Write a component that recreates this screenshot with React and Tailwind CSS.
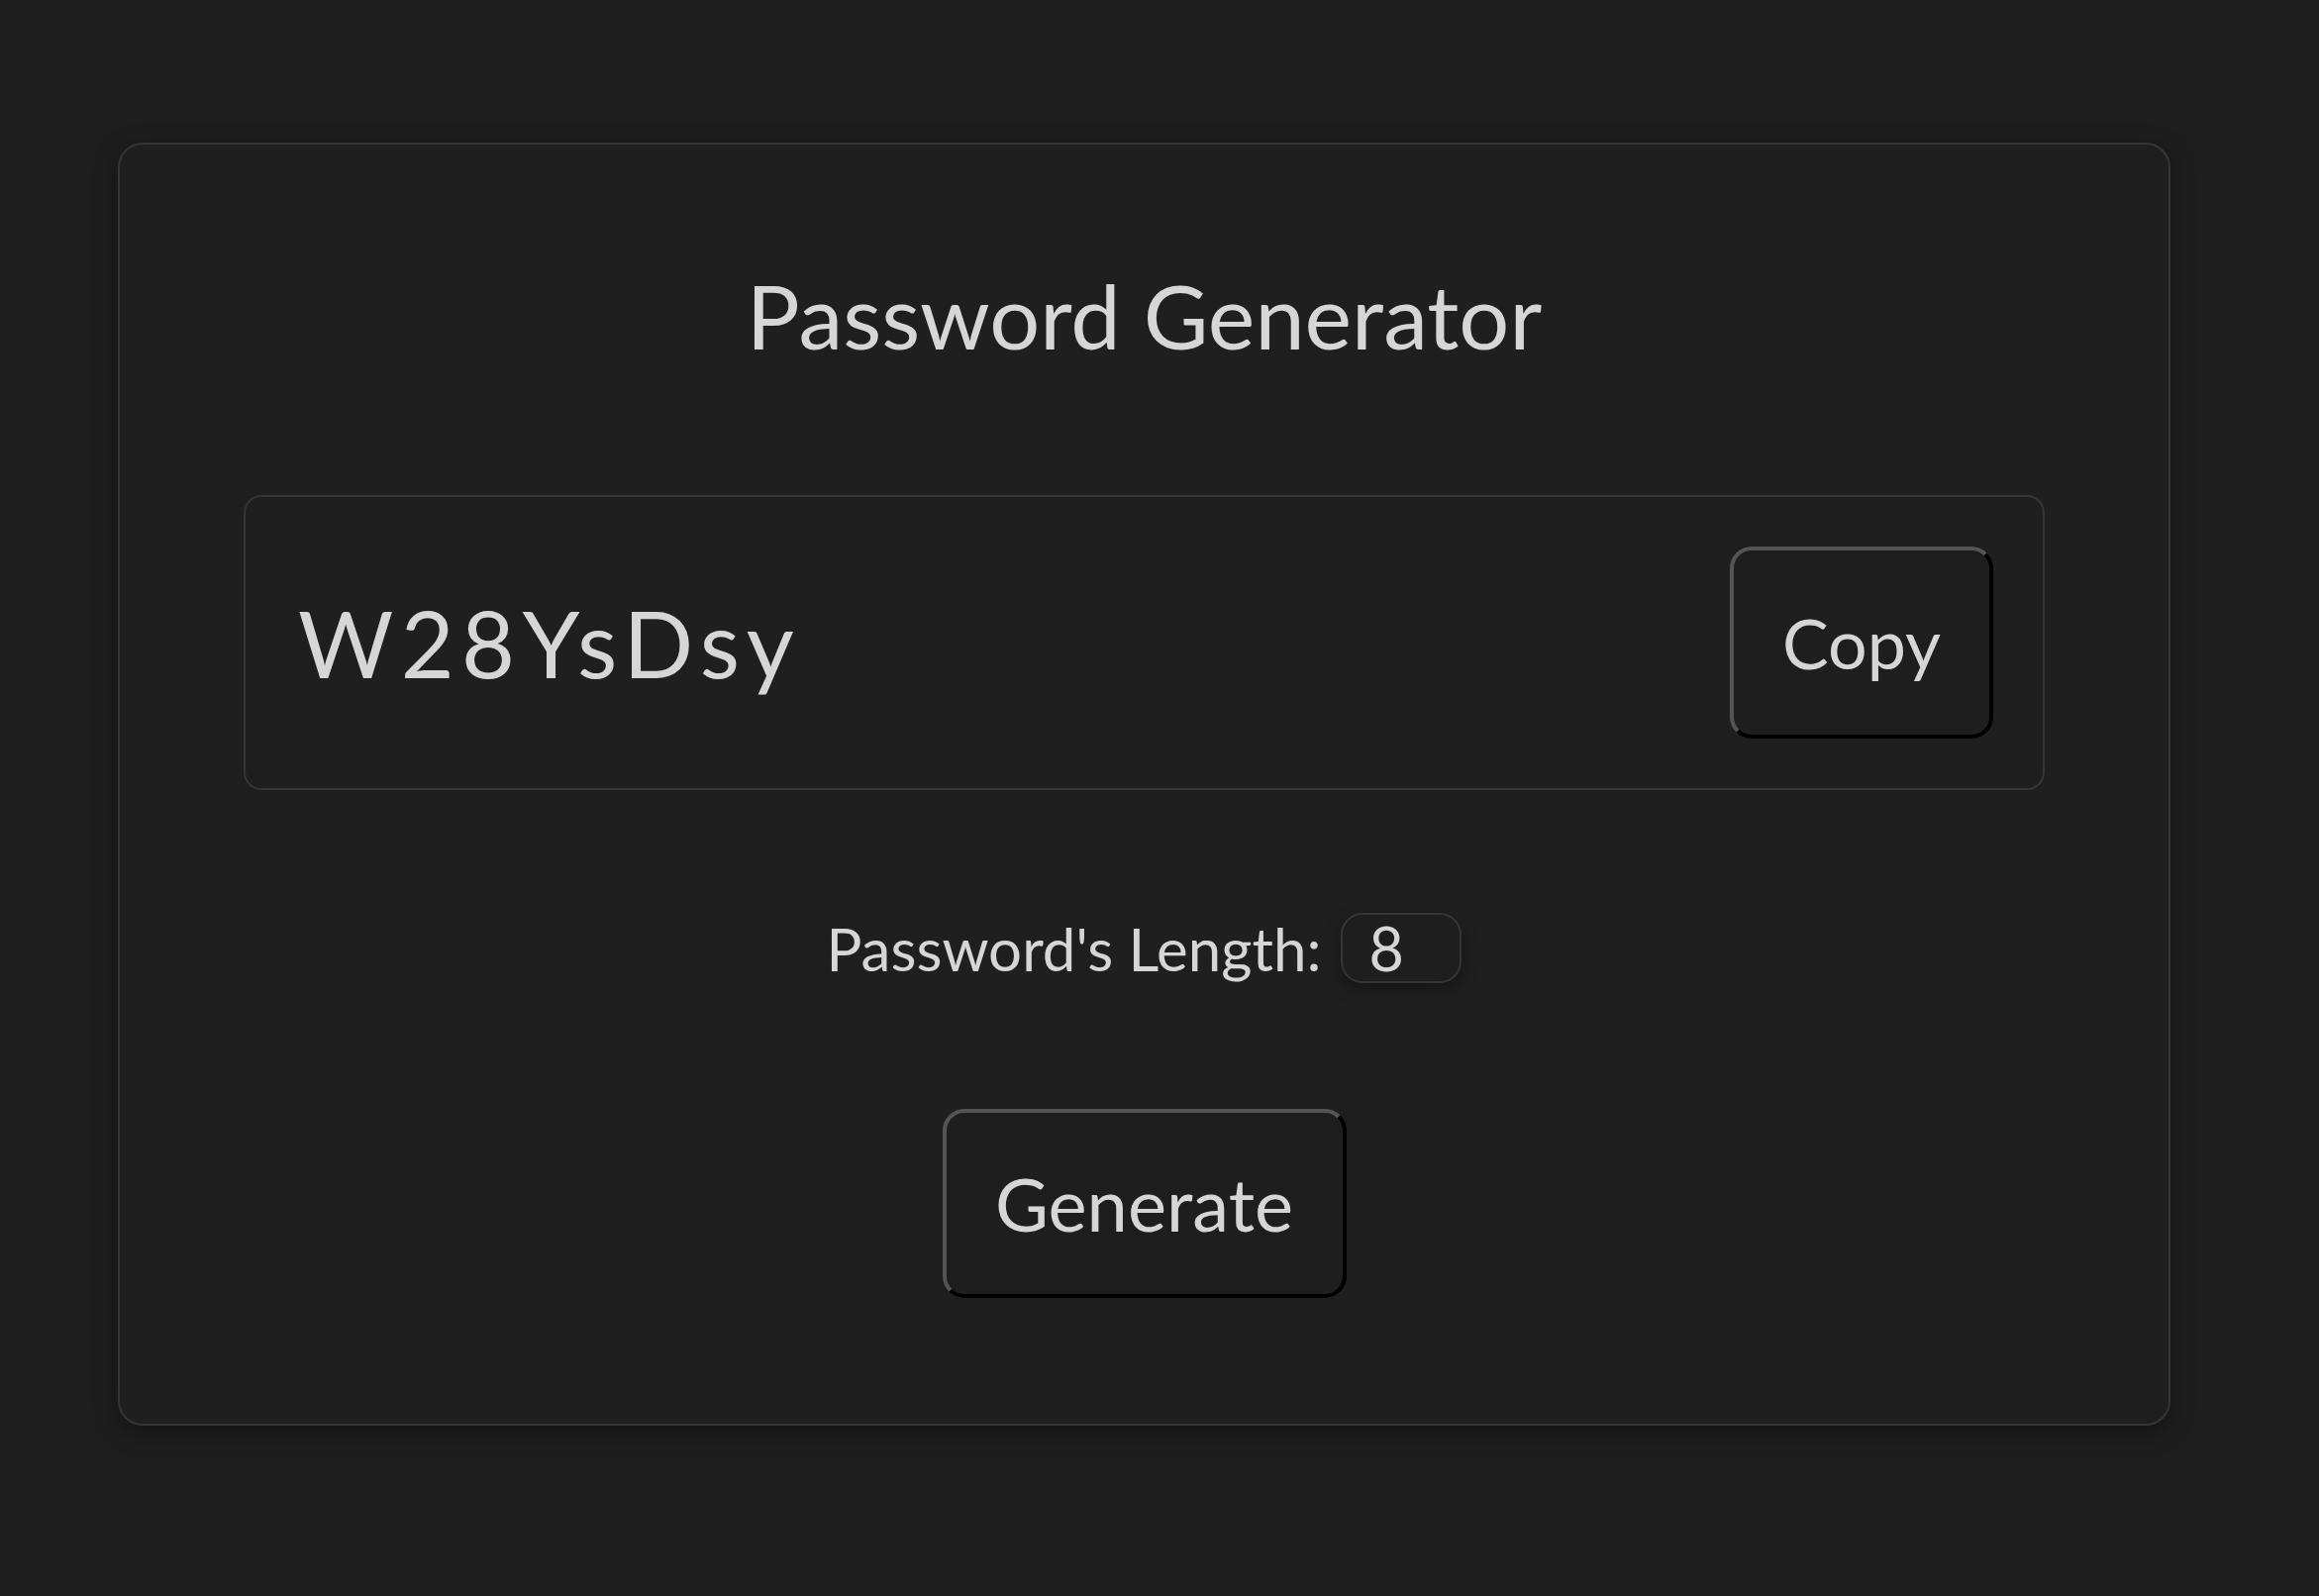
export default function App() {
  return (
    <div
      className="min-h-[1612px] bg-[#1e1e1e] pl-[119px] pt-[144px] text-[#d6d6d6]"
      style={{ fontFamily: "Lato, 'Open Sans', sans-serif" }}
    >
      <div className="flex w-[2073px] flex-col items-center rounded-[25px] border-2 border-[#363636] bg-[#1f1f1f] pb-[127px] pt-[127px] shadow-[0_6px_24px_rgba(0,0,0,0.35)]">
        <h1 className="text-[90px] font-normal leading-none">Password Generator</h1>

        <div className="mt-[137px] flex w-[1819px] items-center justify-between rounded-[18px] border-2 border-[#363636] p-[50px]">
          <span className="pl-[3px] text-[93px] leading-none tracking-[0.08em]">W28YsDsy</span>
          <button className="flex h-[194px] w-[266px] items-center justify-center rounded-[22px] border-[4px] border-b-black border-l-[#555555] border-r-black border-t-[#555555] bg-[#1e1e1e] text-[70px] leading-none text-[#d6d6d6]">
            Copy
          </button>
        </div>

        <div className="mt-[124px] flex items-center gap-[20px]">
          <label className="text-[60px] leading-none">Password's Length:</label>
          <input
            type="number"
            defaultValue={8}
            className="h-[71px] w-[122px] rounded-[22px] border-2 border-[#363636] bg-[#1e1e1e] pl-[26px] text-[61px] leading-none text-[#d6d6d6] shadow-[0_6px_16px_rgba(0,0,0,0.35)] outline-none [appearance:textfield] [&::-webkit-inner-spin-button]:appearance-none"
            style={{ fontFamily: "Lato, sans-serif" }}
          />
        </div>

        <button className="mt-[127px] flex h-[191px] w-[408px] items-center justify-center rounded-[22px] border-[4px] border-b-black border-l-[#555555] border-r-black border-t-[#555555] bg-[#1e1e1e] text-[74px] leading-none text-[#d6d6d6]">
          Generate
        </button>
      </div>
    </div>
  );
}
